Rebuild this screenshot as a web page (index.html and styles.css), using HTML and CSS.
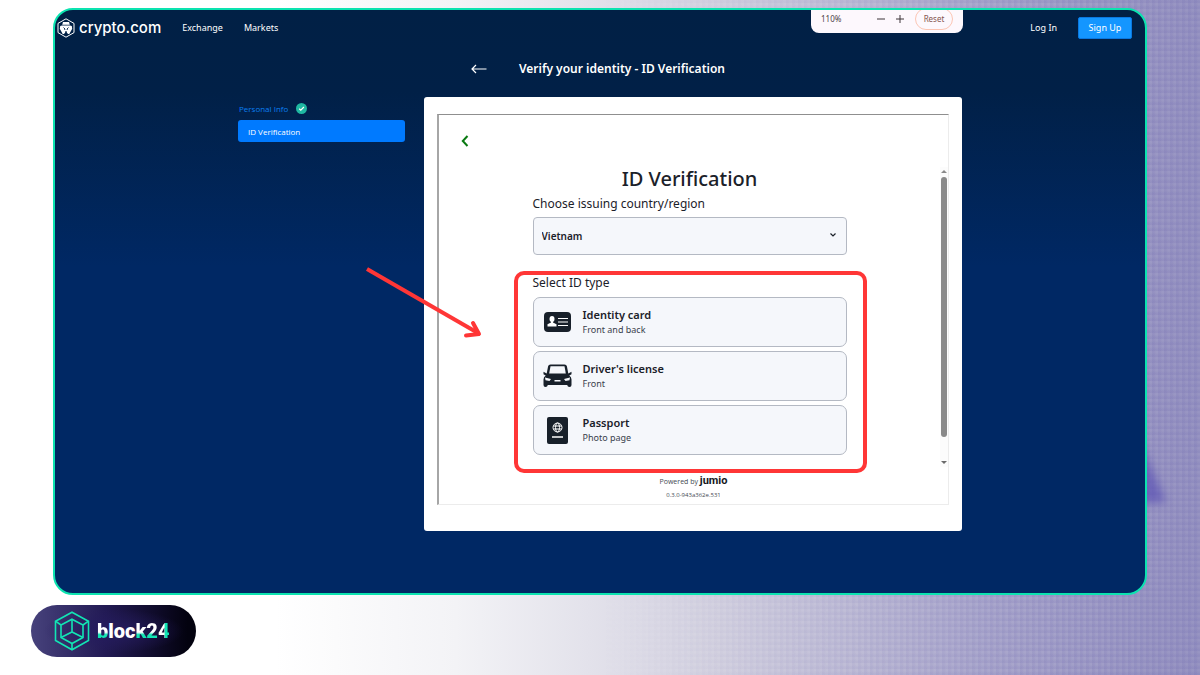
FILE: index.html
```
<!DOCTYPE html>
<html lang="en">
<head>
    <meta charset="UTF-8">
    <meta name="viewport" content="width=device-width, initial-scale=1.0">
    <title>ID Verification</title>
    <link rel="stylesheet" href="styles.css">
</head>
<body>
    <div class="backdrop"></div>
    <svg class="backdrop-shape" viewBox="0 0 60 80"><path d="M0 0 L30 12 L54 68 L0 72Z" fill="#5b52b4"/></svg>

    <div class="window">
        <header>
            <a href="#" class="logo">
                <svg width="18" height="20" viewBox="0 0 18 20">
                    <path d="M9 .8 17 5.4V14.6L9 19.2 1 14.6V5.4Z" fill="none" stroke="#fff" stroke-width="1"/>
                    <path d="M6 4h6l.8 2.800H5.200Z" fill="#fff"/>
                    <path d="M3.200 8 5 7.500h8l1.800.5.4 2.800-2.900 5.200h-1.300l-1.200-1.500v-1.300H8.200v1.300L7 16H5.700L2.800 10.800Z" fill="#fff"/>
                    <path d="M6.500 9.500 8 11l-.4 1M11.500 9.500 10 11l.4 1" fill="none" stroke="#012045" stroke-width=".9"/>
                </svg>
                <span>crypto.com</span>
            </a>
            <nav>
                <a href="#">Exchange</a>
                <a href="#">Markets</a>
            </nav>
            <div class="account">
                <a href="#">Log In</a>
                <button class="signup">Sign Up</button>
            </div>
        </header>

        <div class="zoom-popup">
            <span class="zoom-value">110%</span>
            <button class="zoom-btn" aria-label="Zoom out"><svg width="8" height="8" viewBox="0 0 8 8"><path d="M0 4h8"/></svg></button>
            <button class="zoom-btn" aria-label="Zoom in"><svg width="8" height="8" viewBox="0 0 8 8"><path d="M0 4h8M4 0v8"/></svg></button>
            <button class="zoom-reset">Reset</button>
        </div>

        <main>
            <div class="title-row">
                <button class="back-arrow" aria-label="Back">
                    <svg width="16" height="10" viewBox="0 0 16 10"><path d="M15.500 5H1M5 1 1 5l4 4" fill="none" stroke="#fff" stroke-width="1.200"/></svg>
                </button>
                <h1>Verify your identity - ID Verification</h1>
            </div>

            <div class="columns">
                <aside>
                    <a href="#" class="step done">Personal Info
                        <svg width="11" height="11" viewBox="0 0 11 11"><circle cx="5.500" cy="5.500" r="5.500" fill="#1fb8a2"/><path d="M3.200 5.700 4.800 7.200 7.900 4" fill="none" stroke="#fff" stroke-width="1.200"/></svg>
                    </a>
                    <a href="#" class="step active">ID Verification</a>
                </aside>

                <section class="card">
                    <div class="frame">
                        <button class="frame-back" aria-label="Previous">
                            <svg width="8" height="12" viewBox="0 0 8 12"><path d="M6.500 1 1.800 6l4.700 5" fill="none" stroke="#0a7a12" stroke-width="2"/></svg>
                        </button>
                        <div class="scroll-area">
                            <form class="id-form">
                                <h2>ID Verification</h2>
                                <label for="country">Choose issuing country/region</label>
                                <div class="select-wrap">
                                    <select id="country">
                                        <option>Vietnam</option>
                                    </select>
                                    <svg width="6" height="4" viewBox="0 0 6 4"><path d="M.5 .5 3 3 5.500 .5" fill="none" stroke="#1b2129" stroke-width="1.200"/></svg>
                                </div>

                                <div class="id-types">
                                    <p>Select ID type</p>
                                    <button type="button" class="id-type">
                                        <svg width="29" height="28" viewBox="0 0 29 28">
                                            <rect x="1" y="4" width="27" height="20" rx="4" fill="#18202a"/>
                                            <ellipse cx="9" cy="11" rx="2.500" ry="3" fill="#fff"/>
                                            <path d="M8 12h2v2.500l3.500 1.700V18.500h-9v-2.300L8 14.500Z" fill="#fff"/>
                                            <path d="M15 10.500h10M15 14h10M15 17.500h10" stroke="#fff" stroke-width="1.200"/>
                                        </svg>
                                        <span class="id-text"><b>Identity card</b><small>Front and back</small></span>
                                    </button>
                                    <button type="button" class="id-type">
                                        <svg width="29" height="28" viewBox="0 0 29 28">
                                            <path d="M7.500 2.500h14q2 0 2.400 1.700l1.400 7.300 3.200-1.700v2.400l-2.200 1.300q2.200 1.500 2.200 4V23q0 2-2 2t-2.300-2h-19.400Q4.500 25 2.500 25t-2-2v-5.500q0-2.500 2.200-4L.5 12.200V9.800l3.200 1.700 1.400-7.300q.4-1.700 2.400-1.700Z" fill="#18202a"/>
                                            <path d="M7.500 4.200h14l1.300 7.300H6.200Z" fill="#f5f7fb"/>
                                            <path d="M2 15.500l6 1.500-1.500 2-4-.8ZM27 15.500l-6 1.500 1.500 2 4-.8ZM11.500 18h6v1.500h-6Z" fill="#f5f7fb"/>
                                        </svg>
                                        <span class="id-text"><b>Driver's license</b><small>Front</small></span>
                                    </button>
                                    <button type="button" class="id-type">
                                        <svg width="29" height="28" viewBox="0 0 29 28">
                                            <rect x="4" y="1" width="21" height="27" rx="2" fill="#18202a"/>
                                            <g fill="none" stroke="#fff">
                                                <circle cx="14.500" cy="11.500" r="4.500"/>
                                                <ellipse cx="14.500" cy="11.500" rx="2" ry="4.500"/>
                                                <path d="M10.500 10h8M10.500 13h8"/>
                                                <path d="M9 21h11" stroke-width="1.500"/>
                                            </g>
                                        </svg>
                                        <span class="id-text"><b>Passport</b><small>Photo page</small></span>
                                    </button>
                                    <div class="highlight"></div>
                                </div>
                            </form>
                            <div class="scrollbar">
                                <svg width="6" height="3" viewBox="0 0 6 3"><path d="M0 3 3 0l3 3Z" fill="#8a8a8a"/></svg>
                                <div class="thumb"></div>
                                <svg width="6" height="3" viewBox="0 0 6 3"><path d="M0 0h6L3 3Z" fill="#6b6b6b"/></svg>
                            </div>
                        </div>
                        <footer>
                            <div>Powered by <strong>jumio</strong></div>
                            <div class="version">0.3.0-943a362e.531</div>
                        </footer>
                    </div>
                    <svg class="pointer" width="120" height="76" viewBox="0 0 120 76" fill="none" stroke="#ff3636" stroke-width="4" stroke-linejoin="round">
                        <path d="M3 5 114 69"/>
                        <path d="M109 59l6 11-13 1.500" stroke-linecap="round"/>
                    </svg>
                </section>
            </div>
        </main>
    </div>

    <a href="#" class="brand">
        <svg width="36" height="40" viewBox="0 0 36 40" fill="none" stroke="#12e5b4" stroke-width="1.600">
            <path d="M18 1.200 34.500 10.200V29.500L18 38.800 1.500 29.500V10.200Z"/>
            <path d="M18 8.200 29 14v12.500L18 32.500 7 26.500V14Z"/>
            <path d="M18 8.200V21M7 26.500 18 21l11 5.500M1.500 10.200 7 14M34.500 10.200 29 14M18 32.500V38.800"/>
        </svg>
        <span class="brand-name"><i class="low">b</i>loc<i class="low">k2</i><i class="side">4</i></span>
    </a>
</body>
</html>
```
FILE: styles.css
```
* {
    box-sizing: border-box;
}

body {
    font-family: "Noto Sans", "Open Sans", sans-serif;
    margin: 0;
    padding: 8px 53px 18px;
    min-height: 100vh;
    position: relative;
    overflow: hidden;
    display: flex;
    flex-direction: column;
    background: linear-gradient(to right, #fff 23%, #f3f3f6 38%, #d3d1e0 60%, #aba8cd 82%, #9794c2 100%);
}

a {
    color: inherit;
    text-decoration: none;
}

button {
    font-family: inherit;
    border: none;
    padding: 0;
    background: none;
    cursor: pointer;
}

h1, h2, p {
    margin: 0;
}

/* woven texture, fades out to the left */
.backdrop {
    position: absolute;
    inset: 0;
    background:
        repeating-linear-gradient(90deg, rgba(98, 91, 170, 0.12) 0 2px, transparent 4px 6px),
        repeating-linear-gradient(0deg, rgba(98, 91, 170, 0.12) 0 2px, transparent 4px 6px);
    mask-image: linear-gradient(to right, transparent 50%, #000 90%);
}

.backdrop-shape {
    position: absolute;
    right: 28px;
    top: 434px;
    width: 60px;
    filter: blur(4px);
    opacity: 0.7;
}

.window {
    position: relative;
    border: 2px solid #0ce3b0;
    border-radius: 20px;
    overflow: hidden;
    color: #fff;
    background: linear-gradient(#012045, #012047 14%, #002864 44%, #002864);
}

header {
    display: flex;
    align-items: center;
    height: 35px;
    padding: 0 13px 0 2px;
    font-size: 9px;
}

.logo {
    display: flex;
    align-items: center;
    gap: 4px;
    font-family: Inter, sans-serif;
    font-weight: 500;
    font-size: 15px;
}

nav {
    display: flex;
    gap: 21px;
    margin-left: 21px;
}

.account {
    display: flex;
    align-items: center;
    gap: 21px;
    margin-left: auto;
}

.signup {
    width: 54px;
    height: 22px;
    font-size: 9px;
    color: #fff;
    background-color: #1496ff;
    border: 1px solid #0a78e0;
    border-radius: 2px;
}

.zoom-popup {
    position: absolute;
    top: 0;
    right: 182px;
    width: 152px;
    height: 23px;
    padding: 0 10px 6px;
    display: flex;
    align-items: center;
    gap: 11px;
    overflow: hidden;
    background-color: #fdf8fd;
    border-radius: 0 0 8px 8px;
    color: #4b4247;
    font-size: 8px;
}

.zoom-value {
    flex: 1;
}

.zoom-btn {
    display: flex;
}

.zoom-btn svg {
    stroke: #3c3438;
}

.zoom-reset {
    width: 38px;
    height: 22px;
    font-size: 8px;
    flex-shrink: 0;
    color: #85554f;
    border: 1px solid #fbc5b4;
    border-radius: 11px;
}

main {
    width: 724px;
    max-width: 100%;
    margin: 0 auto;
    padding: 14px 0 62px;
}

.title-row {
    display: flex;
    align-items: center;
    gap: 32px;
    padding-left: 233px;
    height: 20px;
}

h1 {
    font-size: 12px;
    font-weight: 600;
    line-height: 18px;
}

.back-arrow, .frame-back {
    display: flex;
}

.columns {
    display: flex;
    align-items: flex-start;
    gap: 19px;
    margin-top: 18px;
}

aside {
    flex: 1;
    padding-top: 4px;
}

.step {
    display: flex;
    align-items: center;
    font-family: "Open Sans", sans-serif;
    font-size: 8px;
}

.step.done {
    gap: 8px;
    height: 14px;
    padding-left: 1px;
    color: #0b7ff0;
}

.step.active {
    height: 22px;
    margin-top: 5px;
    padding-left: 10px;
    background-color: #007aff;
    border-radius: 3px;
}

.card {
    position: relative;
    width: 538px;
    padding: 17px 13px 26px;
    background-color: #fff;
    border-radius: 3px;
    color: #1b2129;
}

.frame {
    border: 1px solid #ececec;
    border-top-color: #8f8f8f;
    border-left: 2px solid #a6a6a6;
    padding-top: 20px;
}

.frame-back {
    margin-left: 22px;
}

.scroll-area {
    display: flex;
    margin-top: 20px;
    height: 300px;
}

.id-form {
    width: 314px;
    margin: 0 auto;
}

.id-form h2 {
    font-size: 20px;
    font-weight: 500;
    line-height: 24px;
    text-align: center;
}

.id-form label, .id-types p {
    display: block;
    font-size: 12px;
    line-height: 20px;
}

.id-form label {
    margin: 3px 0;
}

.select-wrap {
    position: relative;
}

.select-wrap select {
    display: block;
    width: 100%;
    height: 38px;
    padding: 0 8px;
    appearance: none;
    font-family: inherit;
    font-size: 10px;
    font-weight: 600;
    color: #1b2129;
    background-color: #f5f7fb;
    border: 1px solid #b4b9c3;
    border-radius: 4px;
}

.select-wrap svg {
    position: absolute;
    right: 11px;
    top: 16px;
}

.id-types {
    position: relative;
    display: flex;
    flex-direction: column;
    gap: 4px;
    margin-top: 18px;
}

.id-type {
    display: flex;
    align-items: center;
    gap: 11px;
    height: 50px;
    padding: 0 9px;
    text-align: left;
    color: #1b2129;
    background-color: #f5f7fb;
    border: 1px solid #b4b9c3;
    border-radius: 7px;
}

.id-text b, .id-text small {
    display: block;
}

.id-text b {
    font-size: 11px;
    font-weight: 600;
    line-height: 16px;
}

.id-text small {
    font-size: 9px;
    line-height: 14px;
    color: #39414c;
}

.highlight {
    position: absolute;
    inset: -2px -20px -18px -19px;
    border: 4px solid #ff3636;
    border-radius: 10px;
    pointer-events: none;
}

.scrollbar {
    display: flex;
    flex-direction: column;
    align-items: center;
    gap: 4px;
    width: 8px;
    padding: 3px 0;
    background-color: #fcfcfc;
}

.thumb {
    width: 6px;
    height: 260px;
    margin-bottom: auto;
    background-color: #8a8a8a;
    border-radius: 3px;
}

footer {
    padding: 6px 0 3px;
    font-size: 7px;
    text-align: center;
    color: #444a52;
    font-family: "Open Sans", sans-serif;
}

footer div {
    line-height: 15px;
}

footer strong {
    font-family: Roboto, sans-serif;
    font-size: 11px;
    color: #15181d;
}

footer .version {
    font-size: 6px;
    line-height: 12px;
}

.pointer {
    position: absolute;
    left: -60px;
    top: 167px;
}

.brand {
    position: relative;
    align-self: flex-start;
    display: flex;
    align-items: center;
    gap: 7px;
    width: 165px;
    height: 52px;
    margin: 10px 0 0 -22px;
    padding-left: 23px;
    border-radius: 26px;
    background: radial-gradient(ellipse at 50% 50%, #251c5e 0, transparent 60%), linear-gradient(to right, #47427c, #221a54 45%, #03020f 95%);
}

.brand-name {
    font-family: Roboto, sans-serif;
    font-size: 20px;
    font-weight: 900;
    color: #fff;
}

.brand-name i {
    font-style: normal;
    color: transparent;
    background-clip: text;
}

.brand-name .low {
    background-image: linear-gradient(#fff 55%, #12e5b4 65%);
}

.brand-name .side {
    background-image: linear-gradient(to right, #fff 50%, #12e5b4 60%);
}
```
